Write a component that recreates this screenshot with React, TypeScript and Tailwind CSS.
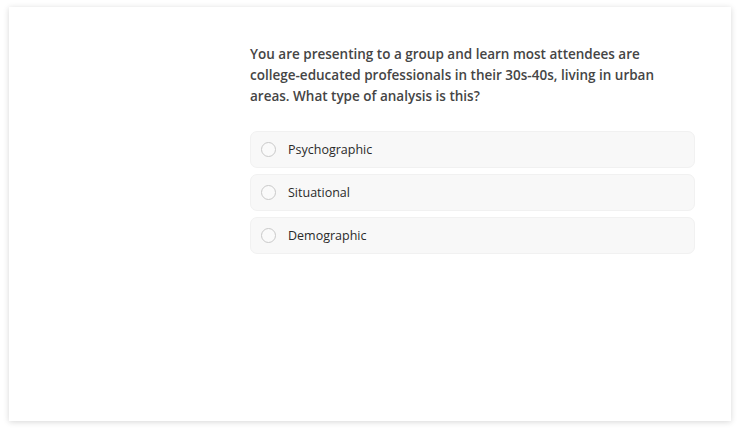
const options = ["Psychographic", "Situational", "Demographic"];

export default function App() {
  return (
    <div className="w-[739px] h-[433px] bg-white pl-[9px] pt-[7px]" style={{ fontFamily: '"Open Sans", sans-serif' }}>
      <div className="w-[722px] h-[414px] bg-white shadow-[0_1px_6px_rgba(0,0,0,0.16)] pl-[241px] pt-[37px]">
        <div className="w-[445px]">
          <p className="w-[420px] text-[13.5px] leading-[21px] font-semibold text-[#454545]">
            You are presenting to a group and learn most attendees are college-educated professionals in their 30s-40s, living in urban areas. What type of analysis is this?
          </p>
          <div className="mt-[24px] flex flex-col gap-[6px]">
            {options.map((o) => (
              <label
                key={o}
                className="h-[37px] flex items-center pl-[10px] gap-[12px] rounded-[7px] bg-[#f8f8f8] border border-[#f1f1f1] cursor-pointer"
              >
                <span className="w-[15px] h-[15px] rounded-full border border-[#c9c9c9] bg-[#fafafa]" />
                <span className="pt-[2px] text-[12.5px] font-medium text-[#2a2a2a]">{o}</span>
              </label>
            ))}
          </div>
        </div>
      </div>
    </div>
  );
}
